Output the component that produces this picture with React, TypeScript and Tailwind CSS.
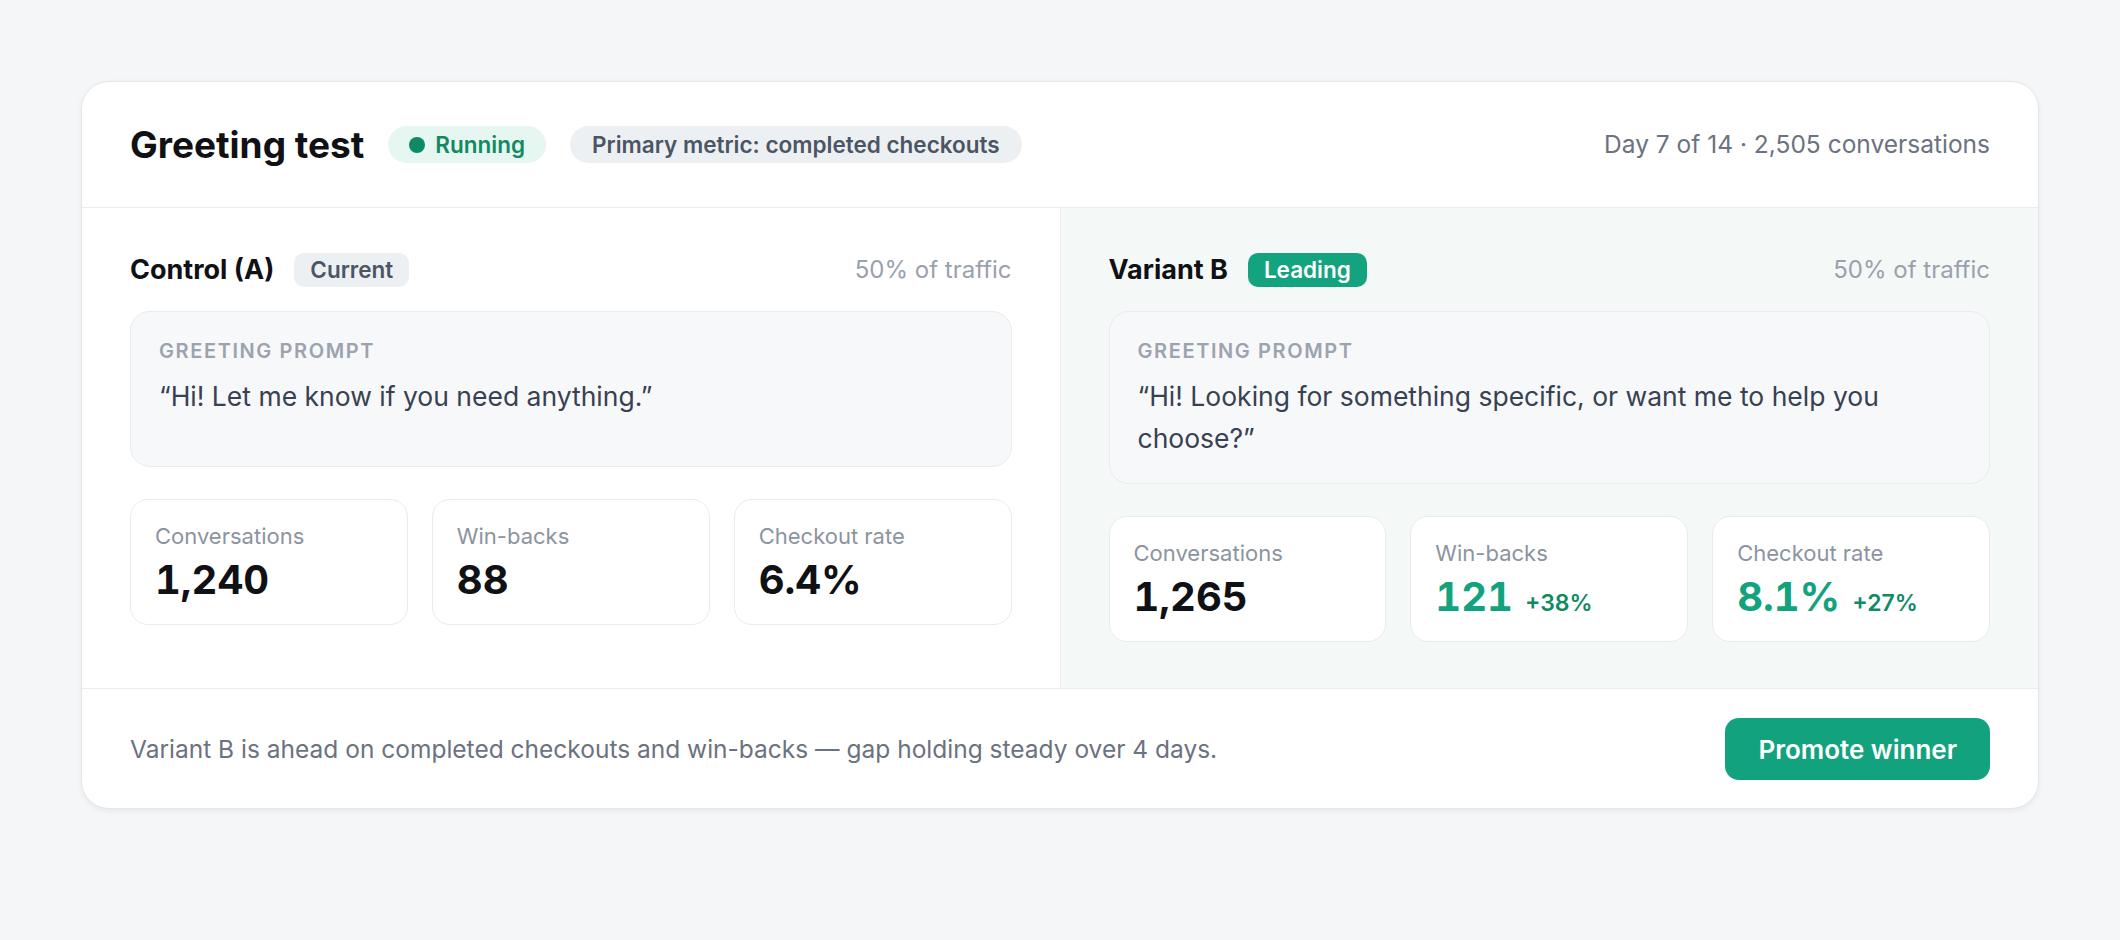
import React from "react";

type Stat = { label: string; value: string; delta?: string; win?: boolean };

function StatCard({ s }: { s: Stat }) {
  return (
    <div className="rounded-[18px] border border-[#e8ebef] bg-white px-6 py-5">
      <div className="text-[22px] leading-[33px] text-[#8c94a1]">{s.label}</div>
      <div className="mt-0.5 flex items-baseline">
        <span
          className={
            s.win
              ? "text-[40px] font-bold tabular-nums leading-[49px] text-[#12a37e]"
              : "text-[40px] font-bold tabular-nums leading-[49px] text-[#0f1115]"
          }
        >
          {s.value}
        </span>
        {s.delta ? (
          <span className="ml-3 text-[23px] font-semibold text-[#0f8a64]">{s.delta}</span>
        ) : null}
      </div>
    </div>
  );
}

function Column({
  name,
  badge,
  leading,
  prompt,
  stats,
  tinted,
}: {
  name: string;
  badge: string;
  leading?: boolean;
  prompt: string;
  stats: Stat[];
  tinted?: boolean;
}) {
  return (
    <div
      className={
        tinted
          ? "flex-1 bg-[#f4f9f7] px-12 pb-[46px] pt-[45px]"
          : "flex-1 border-r border-[#e9edf1] px-12 pb-[46px] pt-[45px]"
      }
    >
      <div className="flex items-center justify-between">
        <div className="flex items-center gap-5">
          <span className="text-[27px] font-bold leading-[34px] text-[#0f1115]">{name}</span>
          <span
            className={
              leading
                ? "rounded-[10px] bg-[#13a37f] px-4 text-[22.5px] font-semibold leading-[34px] text-white"
                : "rounded-[10px] bg-[#edf0f3] px-4 text-[22.5px] font-semibold leading-[34px] text-[#4b5563]"
            }
          >
            {badge}
          </span>
        </div>
        <span className="text-[24px] leading-[34px] text-[#9aa1ad]">50% of traffic</span>
      </div>
      <div className="mt-6 min-h-[156px] rounded-[20px] border border-[#e8ebef] bg-[#f7f8fa] px-7 pb-6 pt-[25px]">
        <div className="text-[20px] font-semibold uppercase leading-[28px] tracking-[0.08em] text-[#9ca3af]">
          Greeting prompt
        </div>
        <div className="mt-2.5 text-[26.5px] leading-[42px] text-[#374151]">{prompt}</div>
      </div>
      <div className="mt-8 grid grid-cols-3 gap-6">
        {stats.map((s) => (
          <StatCard key={s.label} s={s} />
        ))}
      </div>
    </div>
  );
}

export default function App() {
  return (
    <div
      className="min-h-screen bg-[#f5f6f8] px-[81px] pt-[81px]"
      style={{ fontFamily: "Inter, 'Noto Sans', 'Liberation Sans', sans-serif" }}
    >
      <div className="overflow-hidden rounded-[28px] border border-[#e3e6ea] bg-white shadow-[0_2px_6px_rgba(16,24,40,0.06)]">
        <div className="flex items-center justify-between border-b border-[#e9edf1] px-12 py-11">
          <div className="flex items-center gap-6">
            <h1 className="text-[37px] font-bold leading-9 text-[#0f1115]">Greeting test</h1>
            <span className="flex h-[37px] items-center gap-2.5 rounded-full bg-[#e6f6f0] px-[21px] text-[22.5px] font-semibold text-[#118a63]">
              <span className="h-4 w-4 rounded-full bg-[#0e8a66]" />
              Running
            </span>
            <span className="flex h-[37px] items-center rounded-full bg-[#edf0f3] px-[22px] text-[22.5px] font-semibold text-[#4b5563]">
              Primary metric: completed checkouts
            </span>
          </div>
          <span className="text-[24.5px] text-[#6b7280]">Day 7 of 14 · 2,505 conversations</span>
        </div>
        <div className="flex">
          <Column
            name="Control (A)"
            badge="Current"
            prompt="“Hi! Let me know if you need anything.”"
            stats={[
              { label: "Conversations", value: "1,240" },
              { label: "Win-backs", value: "88" },
              { label: "Checkout rate", value: "6.4%" },
            ]}
          />
          <Column
            name="Variant B"
            badge="Leading"
            leading
            tinted
            prompt="“Hi! Looking for something specific, or want me to help you choose?”"
            stats={[
              { label: "Conversations", value: "1,265" },
              { label: "Win-backs", value: "121", delta: "+38%", win: true },
              { label: "Checkout rate", value: "8.1%", delta: "+27%", win: true },
            ]}
          />
        </div>
        <div className="flex items-center justify-between border-t border-[#e9edf1] px-12 pb-7 pt-[29px]">
          <span className="text-[24.5px] text-[#6b7280]">
            Variant B is ahead on completed checkouts and win-backs — gap holding steady over 4 days.
          </span>
          <button className="h-[62px] rounded-[14px] bg-[#12a37e] px-[33px] text-[26px] font-semibold text-white">
            Promote winner
          </button>
        </div>
      </div>
    </div>
  );
}
